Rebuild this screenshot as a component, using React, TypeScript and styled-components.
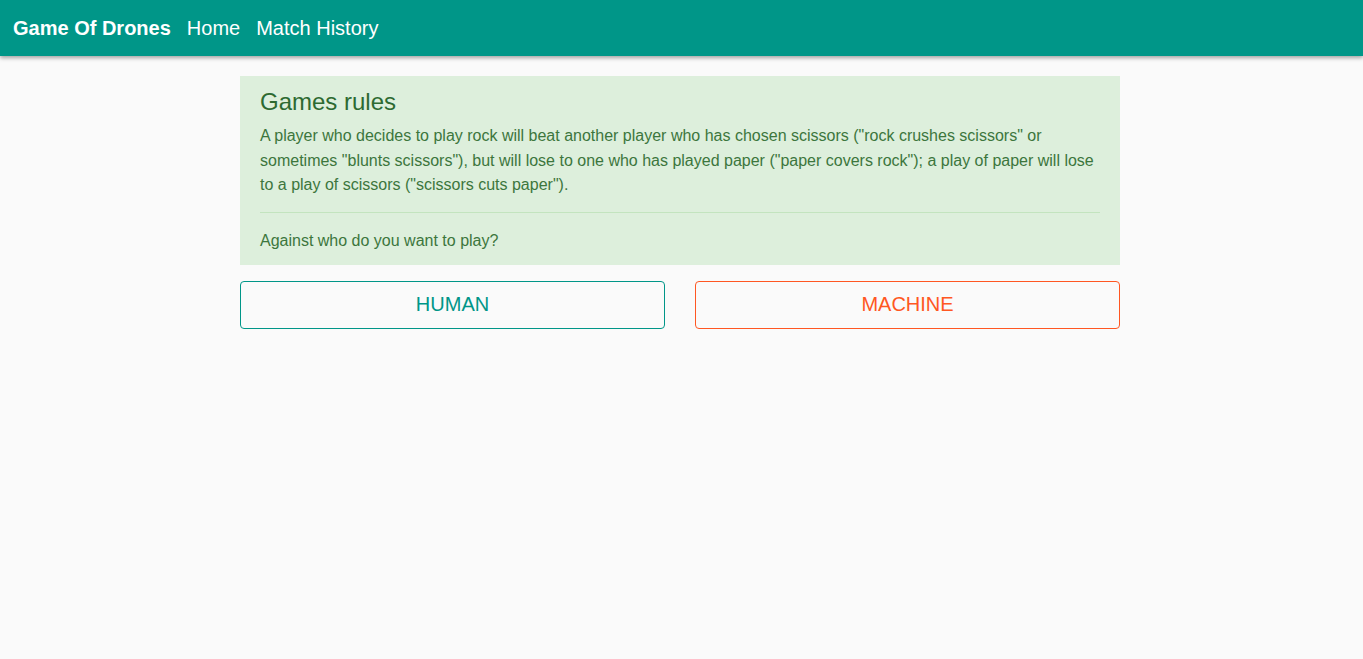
import styled, { createGlobalStyle } from "styled-components";

const GlobalStyle = createGlobalStyle`
  html, body {
    margin: 0;
    padding: 0;
    background: #fafafa;
    font-family: "Liberation Sans", Arial, sans-serif;
  }
`;

const NavBar = styled.header`
  height: 56px;
  display: flex;
  align-items: center;
  gap: 16px;
  padding: 0 13px;
  background-color: #009688;
  box-shadow: 0 2px 4px rgba(0, 0, 0, 0.35);
`;

const Brand = styled.span`
  color: #fff;
  font-size: 20px;
  font-weight: 700;
`;

const NavLink = styled.a`
  color: #fff;
  font-size: 20px;
  text-decoration: none;
  cursor: pointer;
`;

const Page = styled.div`
  padding: 20px 3px 0 0;
`;

const Container = styled.main`
  width: 880px;
  margin: 0 auto;
  display: flex;
  flex-direction: column;
  gap: 16px;
`;

const RulesPanel = styled.section`
  background-color: #ddefdc;
  color: #3c763d;
  padding: 12px 20px 14px;
`;

const RulesTitle = styled.h2`
  margin: 0 0 8px;
  font-size: 24px;
  line-height: 28px;
  font-weight: 400;
  color: #2d6a31;
`;

const RulesText = styled.p`
  margin: 0;
  font-size: 16px;
  line-height: 24.5px;
`;

const Divider = styled.hr`
  border: 0;
  border-top: 1px solid #c3e4bf;
  margin: 14px 0 18px;
`;

const Question = styled.p`
  margin: 0;
  font-size: 16px;
  line-height: 20px;
`;

const ButtonRow = styled.div`
  display: grid;
  grid-template-columns: 1fr 1fr;
  gap: 30px;
`;

const ChoiceButton = styled.button<{ $color: string }>`
  height: 48px;
  background: transparent;
  border: 1px solid ${(p) => p.$color};
  border-radius: 4px;
  color: ${(p) => p.$color};
  font-family: "Liberation Sans", Arial, sans-serif;
  font-size: 20px;
  cursor: pointer;
`;

const App = () => {
  return (
    <>
      <GlobalStyle />
      <NavBar>
        <Brand>Game Of Drones</Brand>
        <NavLink>Home</NavLink>
        <NavLink>Match History</NavLink>
      </NavBar>
      <Page>
        <Container>
          <RulesPanel>
            <RulesTitle>Games rules</RulesTitle>
            <RulesText>
              A player who decides to play rock will beat another player who has
              chosen scissors ("rock crushes scissors" or sometimes "blunts
              scissors"), but will lose to one who has played paper ("paper covers
              rock"); a play of paper will lose to a play of scissors ("scissors
              cuts paper").
            </RulesText>
            <Divider />
            <Question>Against who do you want to play?</Question>
          </RulesPanel>
          <ButtonRow>
            <ChoiceButton $color="#009688">HUMAN</ChoiceButton>
            <ChoiceButton $color="#ff5722">MACHINE</ChoiceButton>
          </ButtonRow>
        </Container>
      </Page>
    </>
  );
};

export default App;
